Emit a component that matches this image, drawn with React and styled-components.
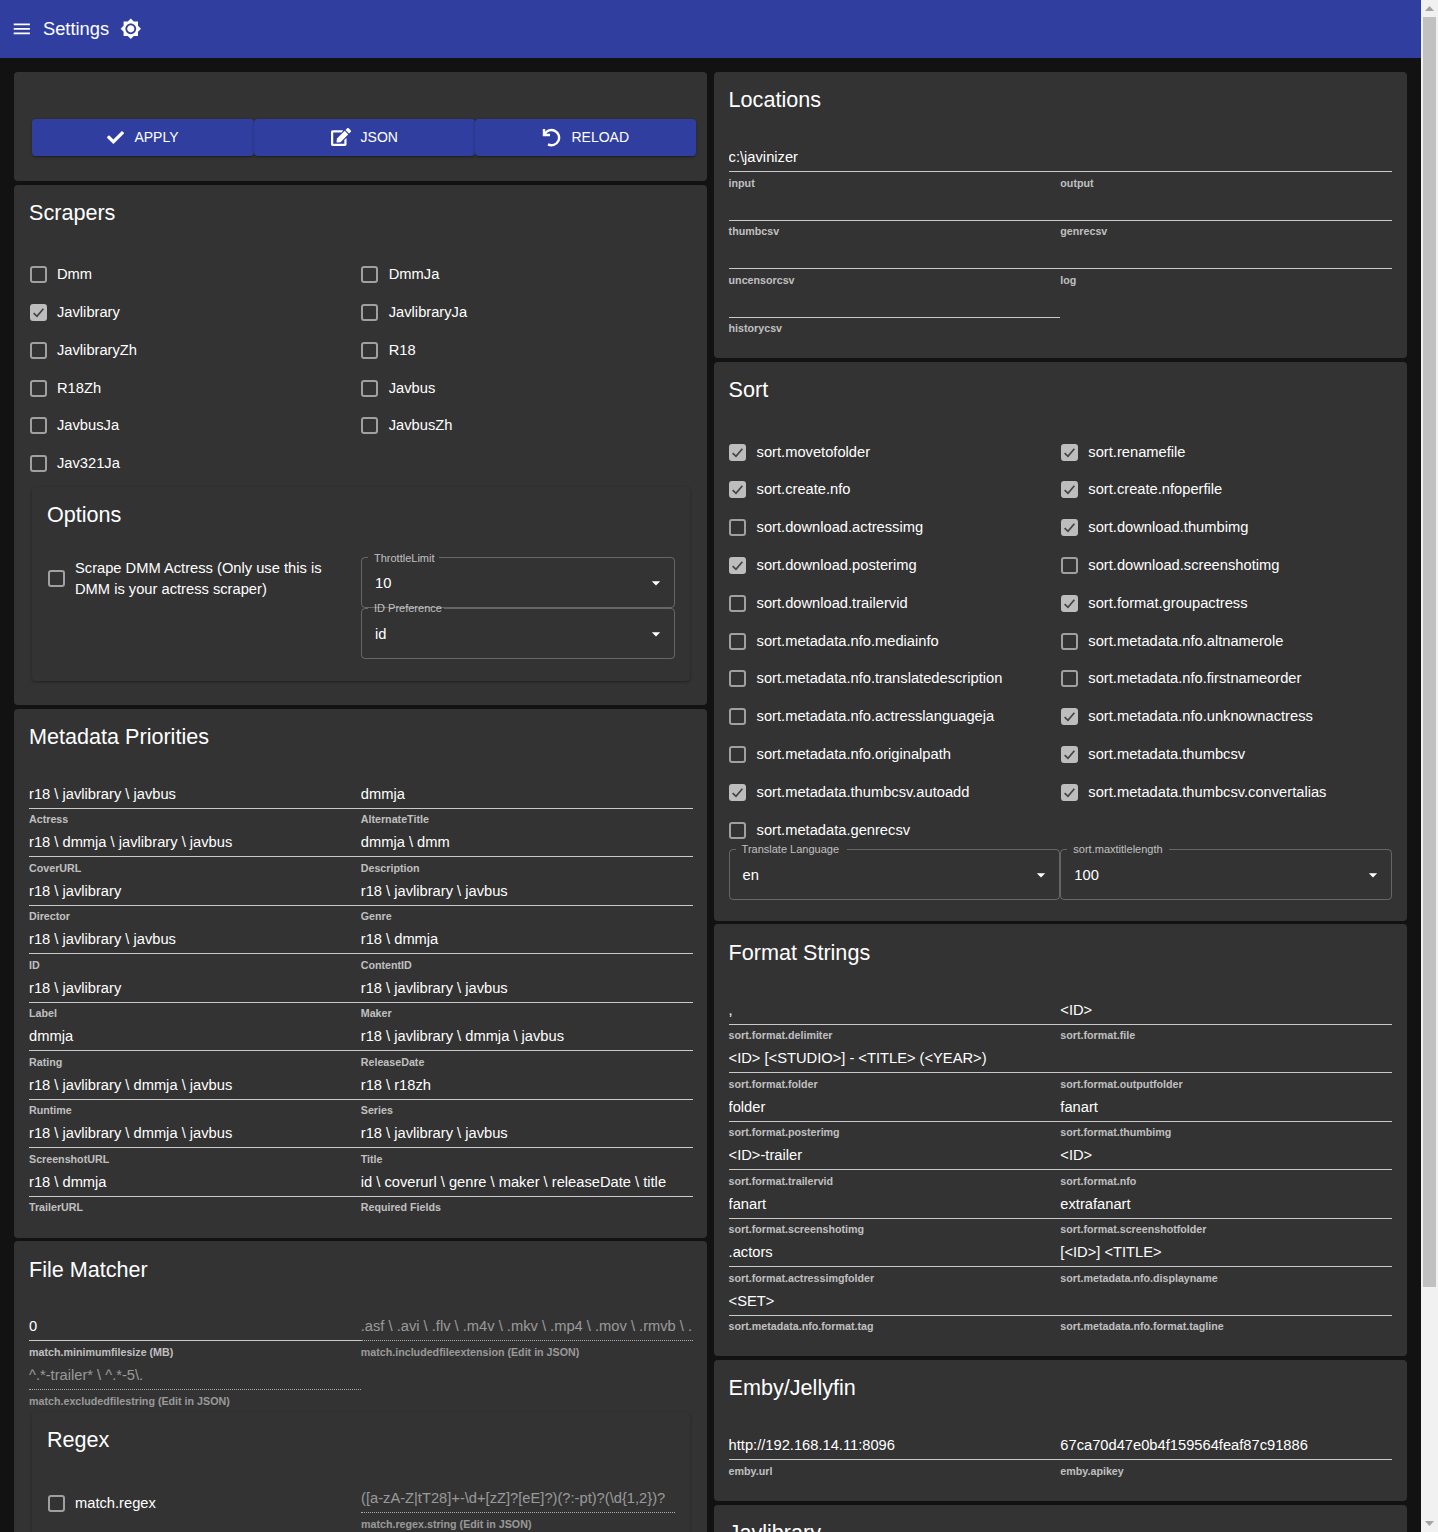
import styled, { createGlobalStyle } from 'styled-components';
import { FaCheck, FaEdit } from 'react-icons/fa';

const GlobalStyle = createGlobalStyle`
  html, body {
    margin: 0;
    height: 100%;
    overflow: hidden;
    background: #121212;
    color: #fff;
    font-family: 'Liberation Sans', Arial, sans-serif;
    font-size: 14.7px;
  }
  * { box-sizing: border-box; }
`;

const Shell = styled.div`
  display: flex;
  height: 100vh;
  overflow: hidden;
`;
const Page = styled.div`
  flex: 1;
  min-width: 0;
`;
const AppBar = styled.header`
  display: flex;
  align-items: center;
  height: 58px;
  padding-left: 11px;
  background: #303f9f;
`;
const AppTitle = styled.h1`
  margin: 0 11px 0 10.4px;
  font-size: 18.3px;
  font-weight: 400;
`;
const BarIcon = styled.svg`
  width: 21.6px;
  height: 21.6px;
  fill: #fff;
`;
const Columns = styled.main`
  display: grid;
  grid-template-columns: 693px 693px;
  column-gap: 6.6px;
  padding: 14px 14px 0;
`;
const Column = styled.div`
  display: flex;
  flex-direction: column;
  gap: 3.6px;
`;
const Card = styled.section`
  padding: 14.4px 14.5px 21.3px 15px;
  border-radius: 4px;
  background: #333;
`;
const ActionCard = styled(Card)`
  padding: 47px 15px 25px;
`;
const SubCard = styled.section`
  margin: ${(p) => p.$margin || '4px 3px 3px'};
  padding: 14.4px 14.5px 22px 15px;
  border-radius: 4px;
  background: #333;
  box-shadow: 0 1px 3px rgba(0, 0, 0, 0.35);
`;
const Title = styled.h2`
  height: 28px;
  margin: 0 0 28.8px;
  font-size: 21.6px;
  font-weight: 400;
  line-height: 28px;
`;
const ButtonRow = styled.div`
  display: flex;
  margin: 0 -4px 0 3px;
`;
const ActionButton = styled.button`
  flex: 0 0 ${(p) => p.$width}px;
  display: flex;
  align-items: center;
  justify-content: center;
  gap: 10px;
  height: 37px;
  padding: 0 0 1px;
  border: 0;
  border-radius: 4px;
  background: #303f9f;
  color: #fff;
  font: 400 14px 'Liberation Sans', Arial, sans-serif;
  box-shadow: 0 2px 1px -1px rgba(0, 0, 0, 0.2), 0 1px 3px rgba(0, 0, 0, 0.3);
`;
const ReloadIcon = styled.svg`
  width: 20px;
  height: 20px;
  fill: none;
  stroke: #fff;
  stroke-width: 2.4;
`;
const Grid = styled.div`
  display: grid;
  grid-template-columns: 1fr 1fr;
`;
const CheckRow = styled.label`
  display: flex;
  align-items: center;
  min-height: 37.8px;
  line-height: 21px;
`;
const TallCheckRow = styled(CheckRow)`
  align-self: start;
  min-height: ${(p) => p.$height || 42}px;
  padding-right: 24px;
`;
const Box = styled.span`
  flex: none;
  display: flex;
  align-items: center;
  justify-content: center;
  width: 17px;
  height: 17px;
  margin: 0 10.5px 0 0.5px;
  border: 2px solid ${(p) => (p.$checked ? '#bdbdbd' : '#a0a0a0')};
  border-radius: 3px;
  background: ${(p) => (p.$checked ? '#bdbdbd' : 'transparent')};
`;
const BoxTick = styled.svg`
  width: 13px;
  height: 13px;
  fill: none;
  stroke: #444;
  stroke-width: 1.6;
`;
const Field = styled.div`
  height: 48.5px;
`;
const FieldValue = styled.div`
  height: 29px;
  overflow: hidden;
  border-bottom: 1px ${(p) => (p.$disabled ? 'dotted rgba(255,255,255,.6)' : 'solid #c9c9c9')};
  color: ${(p) => (p.$disabled ? 'rgba(255,255,255,.5)' : '#fff')};
  line-height: 28px;
  white-space: nowrap;
`;
const FieldLabel = styled.div`
  margin-top: 4.6px;
  color: ${(p) => (p.$disabled ? 'rgba(255,255,255,.5)' : 'rgba(255,255,255,.7)')};
  font-size: 10.7px;
  font-weight: 700;
  line-height: 12px;
`;
const SelectBox = styled.fieldset`
  display: block;
  min-width: 0;
  height: 56.5px;
  margin: -6px 0 0;
  padding: 0 8px 0 13px;
  border: 1px solid rgba(255, 255, 255, 0.25);
  border-radius: 4px;
`;
const SelectInner = styled.div`
  display: flex;
  align-items: center;
  justify-content: space-between;
  height: 43px;
`;
const SelectLegend = styled.legend`
  margin-left: -7px;
  margin-bottom: -2px;
  padding: 0 ${(p) => p.$gap || 4}px 0 6px;
  color: rgba(255, 255, 255, 0.7);
  font-size: 11px;
  line-height: 12px;
`;
const Arrow = styled.svg`
  width: 20px;
  height: 20px;
  fill: #fff;
`;
const SelectStack = styled.div`
  display: flex;
  flex-direction: column;
`;
const RegexField = styled(Field)`
  margin-top: 1px;
`;
const Scrollbar = styled.aside`
  flex: none;
  display: flex;
  flex-direction: column;
  align-items: center;
  justify-content: space-between;
  width: 17px;
  background: #f1f1f1;
`;
const ScrollThumb = styled.div`
  width: 13px;
  height: 1270px;
  background: #c1c1c1;
`;
const ScrollEnd = styled.div`
  display: flex;
  align-items: center;
  justify-content: center;
  height: 17px;
`;
const ScrollTop = styled.div`
  display: flex;
  flex-direction: column;
  align-items: center;
`;
const ScrollArrow = styled.svg`
  width: 9px;
  height: 5px;
  fill: #a3a3a3;
`;

const scrapers = [
  ['Dmm', false], ['DmmJa', false],
  ['Javlibrary', true], ['JavlibraryJa', false],
  ['JavlibraryZh', false], ['R18', false],
  ['R18Zh', false], ['Javbus', false],
  ['JavbusJa', false], ['JavbusZh', false],
  ['Jav321Ja', false],
];

const sortChecks = [
  ['sort.movetofolder', true], ['sort.renamefile', true],
  ['sort.create.nfo', true], ['sort.create.nfoperfile', true],
  ['sort.download.actressimg', false], ['sort.download.thumbimg', true],
  ['sort.download.posterimg', true], ['sort.download.screenshotimg', false],
  ['sort.download.trailervid', false], ['sort.format.groupactress', true],
  ['sort.metadata.nfo.mediainfo', false], ['sort.metadata.nfo.altnamerole', false],
  ['sort.metadata.nfo.translatedescription', false], ['sort.metadata.nfo.firstnameorder', false],
  ['sort.metadata.nfo.actresslanguageja', false], ['sort.metadata.nfo.unknownactress', true],
  ['sort.metadata.nfo.originalpath', false], ['sort.metadata.thumbcsv', true],
  ['sort.metadata.thumbcsv.autoadd', true], ['sort.metadata.thumbcsv.convertalias', true],
  ['sort.metadata.genrecsv', false],
];

const priorities = [
  ['r18 \\ javlibrary \\ javbus', 'Actress'],
  ['dmmja', 'AlternateTitle'],
  ['r18 \\ dmmja \\ javlibrary \\ javbus', 'CoverURL'],
  ['dmmja \\ dmm', 'Description'],
  ['r18 \\ javlibrary', 'Director'],
  ['r18 \\ javlibrary \\ javbus', 'Genre'],
  ['r18 \\ javlibrary \\ javbus', 'ID'],
  ['r18 \\ dmmja', 'ContentID'],
  ['r18 \\ javlibrary', 'Label'],
  ['r18 \\ javlibrary \\ javbus', 'Maker'],
  ['dmmja', 'Rating'],
  ['r18 \\ javlibrary \\ dmmja \\ javbus', 'ReleaseDate'],
  ['r18 \\ javlibrary \\ dmmja \\ javbus', 'Runtime'],
  ['r18 \\ r18zh', 'Series'],
  ['r18 \\ javlibrary \\ dmmja \\ javbus', 'ScreenshotURL'],
  ['r18 \\ javlibrary \\ javbus', 'Title'],
  ['r18 \\ dmmja', 'TrailerURL'],
  ['id \\ coverurl \\ genre \\ maker \\ releaseDate \\ title', 'Required Fields'],
];

const locations = [
  ['c:\\javinizer', 'input'],
  ['', 'output'],
  ['', 'thumbcsv'],
  ['', 'genrecsv'],
  ['', 'uncensorcsv'],
  ['', 'log'],
  ['', 'historycsv'],
];

const formats = [
  [',', 'sort.format.delimiter'],
  ['<ID>', 'sort.format.file'],
  ['<ID> [<STUDIO>] - <TITLE> (<YEAR>)', 'sort.format.folder'],
  ['', 'sort.format.outputfolder'],
  ['folder', 'sort.format.posterimg'],
  ['fanart', 'sort.format.thumbimg'],
  ['<ID>-trailer', 'sort.format.trailervid'],
  ['<ID>', 'sort.format.nfo'],
  ['fanart', 'sort.format.screenshotimg'],
  ['extrafanart', 'sort.format.screenshotfolder'],
  ['.actors', 'sort.format.actressimgfolder'],
  ['[<ID>] <TITLE>', 'sort.metadata.nfo.displayname'],
  ['<SET>', 'sort.metadata.nfo.format.tag'],
  ['', 'sort.metadata.nfo.format.tagline'],
];

const Check = ({ label, checked }) => (
  <CheckRow>
    <Box $checked={checked}>
      {checked && (
        <BoxTick viewBox='0 0 12 12'>
          <path d='M1.5 6.5 4.6 9.5 10.5 2.5' />
        </BoxTick>
      )}
    </Box>
    <span>{label}</span>
  </CheckRow>
);

const TextField = ({ value, label, disabled }) => (
  <Field>
    <FieldValue $disabled={disabled}>{value}</FieldValue>
    <FieldLabel $disabled={disabled}>{label}</FieldLabel>
  </Field>
);

const Select = ({ label, value, gap }) => (
  <SelectBox>
    <SelectLegend $gap={gap}>{label}</SelectLegend>
    <SelectInner>
      <span>{value}</span>
      <Arrow viewBox='0 0 24 24'>
        <path d='M7 10l5 5 5-5z' />
      </Arrow>
    </SelectInner>
  </SelectBox>
);

const App = () => {
  return (
    <Shell>
      <GlobalStyle />
      <Page>
        <AppBar>
          <BarIcon viewBox='0 0 24 24'>
            <path d='M3 18h18v-2H3v2zm0-5h18v-2H3v2zm0-7v2h18V6H3z' />
          </BarIcon>
          <AppTitle>Settings</AppTitle>
          <BarIcon viewBox='0 0 24 24'>
            <path d='M20 8.69V4h-4.69L12 .69 8.69 4H4v4.69L.69 12 4 15.31V20h4.69L12 23.31 15.31 20H20v-4.69L23.31 12 20 8.69zM12 18c-3.31 0-6-2.69-6-6s2.69-6 6-6 6 2.69 6 6-2.69 6-6 6zm0-10c-2.21 0-4 1.79-4 4s1.79 4 4 4 4-1.79 4-4-1.79-4-4-4z' />
          </BarIcon>
        </AppBar>
        <Columns>
          <Column>
            <ActionCard>
              <ButtonRow>
                <ActionButton $width={222}>
                  <FaCheck size={17} />
                  APPLY
                </ActionButton>
                <ActionButton $width={220.5}>
                  <FaEdit size={20} />
                  JSON
                </ActionButton>
                <ActionButton $width={221.5}>
                  <ReloadIcon viewBox='0 0 20 20'>
                    <path d='M3 2v6h6' />
                    <path d='M3.6 7.4A7.6 7.6 0 1 1 7 17.4' />
                  </ReloadIcon>
                  RELOAD
                </ActionButton>
              </ButtonRow>
            </ActionCard>

            <Card>
              <Title>Scrapers</Title>
              <Grid>
                {scrapers.map(([label, checked]) => (
                  <Check key={label} label={label} checked={checked} />
                ))}
              </Grid>
              <SubCard>
                <Title>Options</Title>
                <Grid>
                  <TallCheckRow>
                    <Box />
                    <span>Scrape DMM Actress (Only use this is DMM is your actress scraper)</span>
                  </TallCheckRow>
                  <SelectStack>
                    <Select label='ThrottleLimit' value='10' />
                    <Select label='ID Preference' value='id' gap={2} />
                  </SelectStack>
                </Grid>
              </SubCard>
            </Card>

            <Card>
              <Title>Metadata Priorities</Title>
              <Grid>
                {priorities.map(([value, label]) => (
                  <TextField key={label} value={value} label={label} />
                ))}
              </Grid>
            </Card>

            <Card>
              <Title>File Matcher</Title>
              <Grid>
                <TextField value='0' label='match.minimumfilesize (MB)' />
                <TextField
                  disabled
                  value='.asf \ .avi \ .flv \ .m4v \ .mkv \ .mp4 \ .mov \ .rmvb \ .'
                  label='match.includedfileextension (Edit in JSON)'
                />
                <TextField
                  disabled
                  value='^.*-trailer* \ ^.*-5\.'
                  label='match.excludedfilestring (Edit in JSON)'
                />
              </Grid>
              <SubCard $margin='2.5px 3px 0'>
                <Title>Regex</Title>
                <Grid>
                  <TallCheckRow $height={40}>
                    <Box />
                    <span>match.regex</span>
                  </TallCheckRow>
                  <RegexField>
                    <FieldValue $disabled>{'([a-zA-Z|tT28]+-\\d+[zZ]?[eE]?)(?:-pt)?(\\d{1,2})?'}</FieldValue>
                    <FieldLabel $disabled>match.regex.string (Edit in JSON)</FieldLabel>
                  </RegexField>
                </Grid>
              </SubCard>
            </Card>
          </Column>

          <Column>
            <Card>
              <Title>Locations</Title>
              <Grid>
                {locations.map(([value, label]) => (
                  <TextField key={label} value={value} label={label} />
                ))}
              </Grid>
            </Card>

            <Card>
              <Title>Sort</Title>
              <Grid>
                {sortChecks.map(([label, checked]) => (
                  <Check key={label} label={label} checked={checked} />
                ))}
              </Grid>
              <Grid>
                <Select label='Translate Language' value='en' gap={8} />
                <Select label='sort.maxtitlelength' value='100' gap={6} />
              </Grid>
            </Card>

            <Card>
              <Title>Format Strings</Title>
              <Grid>
                {formats.map(([value, label]) => (
                  <TextField key={label} value={value} label={label} />
                ))}
              </Grid>
            </Card>

            <Card>
              <Title>Emby/Jellyfin</Title>
              <Grid>
                <TextField value='http://192.168.14.11:8096' label='emby.url' />
                <TextField value='67ca70d47e0b4f159564feaf87c91886' label='emby.apikey' />
              </Grid>
            </Card>

            <Card>
              <Title>Javlibrary</Title>
            </Card>
          </Column>
        </Columns>
      </Page>
      <Scrollbar>
        <ScrollTop>
          <ScrollEnd>
            <ScrollArrow viewBox='0 0 9 5'>
              <path d='M4.5 0 9 5H0z' />
            </ScrollArrow>
          </ScrollEnd>
          <ScrollThumb />
        </ScrollTop>
        <ScrollEnd>
          <ScrollArrow viewBox='0 0 9 5'>
            <path d='M0 0h9L4.5 5z' />
          </ScrollArrow>
        </ScrollEnd>
      </Scrollbar>
    </Shell>
  );
};

export default App;
